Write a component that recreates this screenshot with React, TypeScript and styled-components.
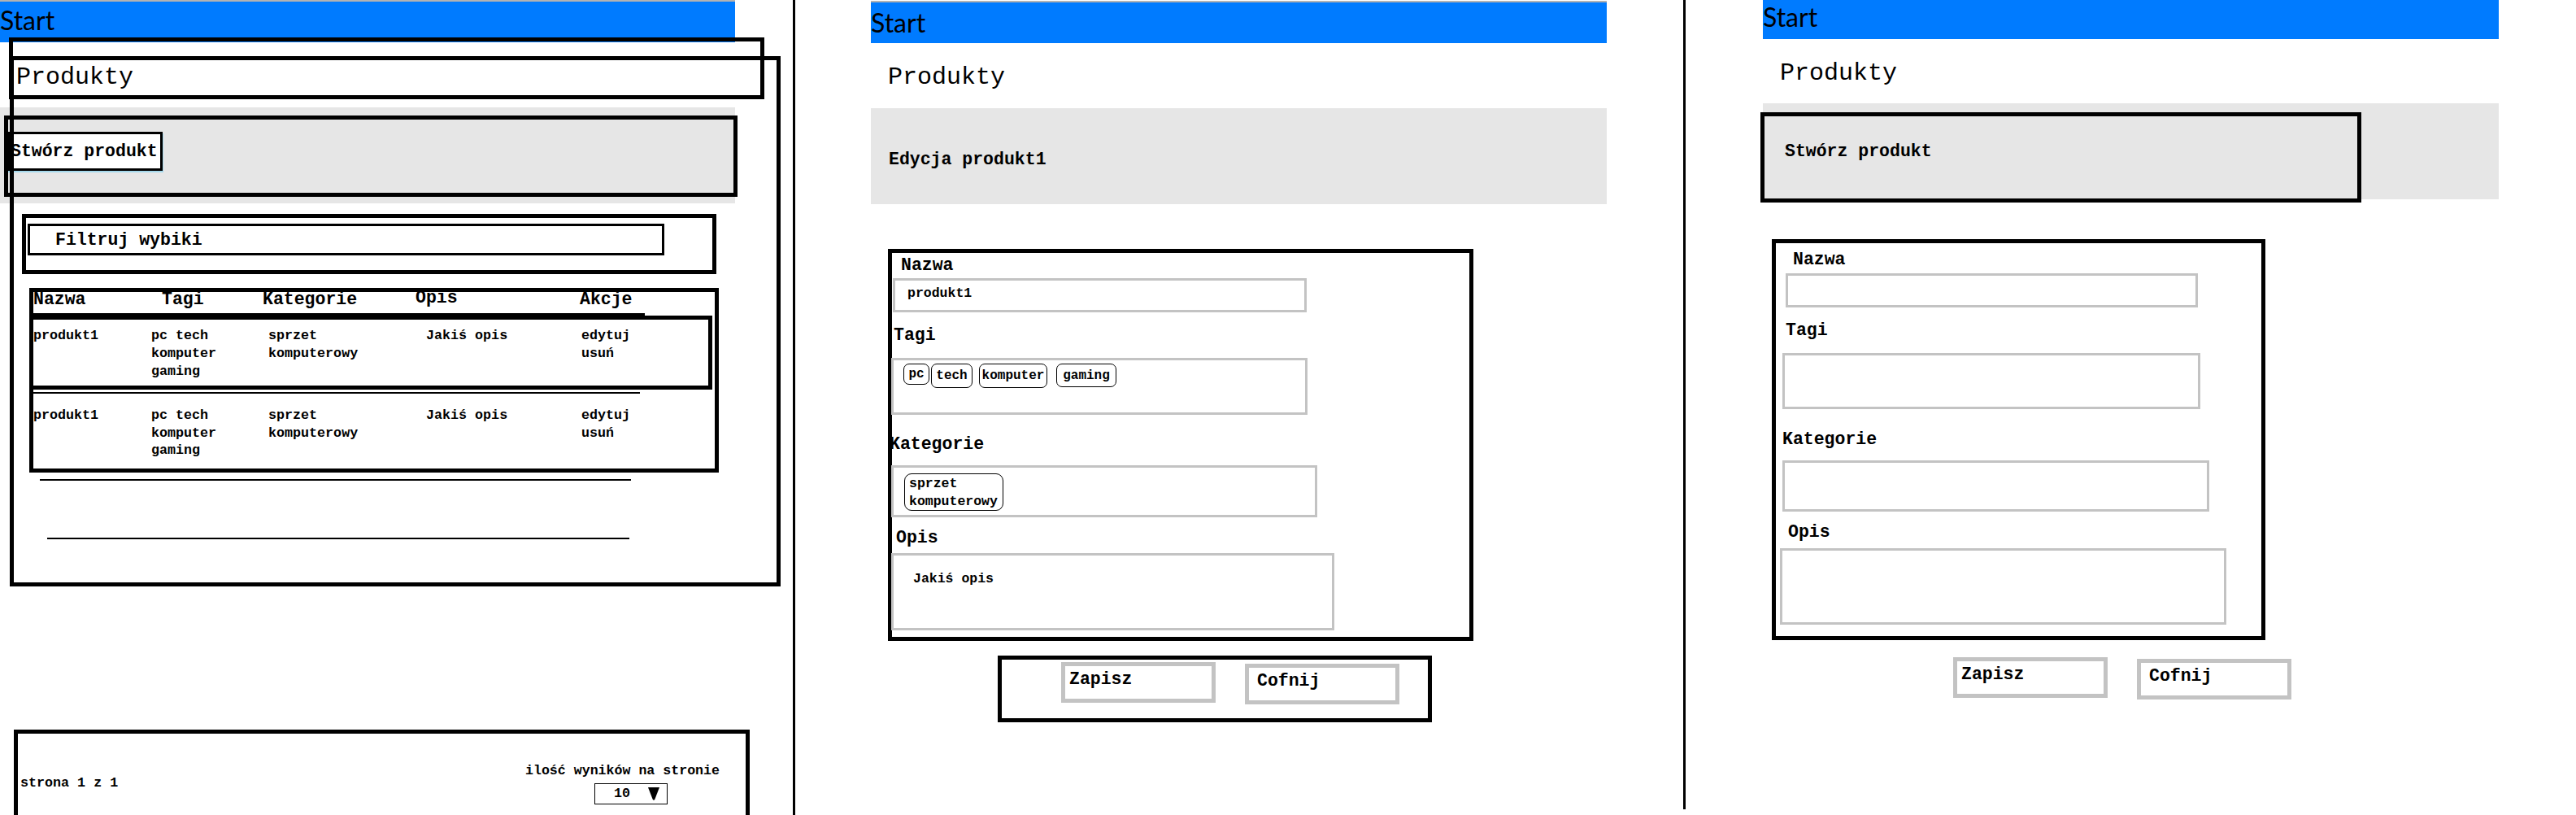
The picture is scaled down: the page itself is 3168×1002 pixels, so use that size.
import React from 'react';
import styled, { createGlobalStyle } from 'styled-components';

const MONO = `"Liberation Mono", "DejaVu Sans Mono", monospace`;

const Global = createGlobalStyle`
  html, body { margin: 0; padding: 0; background: #fff; }
  body { font-family: ${MONO}; color: #000; }
  *, *::before, *::after { box-sizing: border-box; }
`;

const Page = styled.div`
  display: flex;
  width: 3168px;
  height: 1002px;
  overflow: hidden;
  background: #fff;
`;

const Column = styled.section<{ $w: number; $pl: number }>`
  position: relative;
  flex: none;
  width: ${(p) => p.$w}px;
  height: 100%;
  padding-left: ${(p) => p.$pl}px;
  display: flex;
  flex-direction: column;
  align-items: flex-start;
`;

const Divider = styled.div<{ $h: number }>`
  flex: none;
  width: 3px;
  height: ${(p) => p.$h}px;
  background: #000;
`;

const TopBar = styled.header<{ $w: number; $mt: number; $grey: boolean; $h: number; $lh: number }>`
  flex: none;
  width: ${(p) => p.$w}px;
  margin-top: ${(p) => p.$mt}px;
  height: ${(p) => p.$h + (p.$grey ? 2 : 0)}px;
  border-top: ${(p) => (p.$grey ? '2px solid #b2b2b2' : 'none')};
  background: #007bff;
  font-family: Lato, "Open Sans", sans-serif;
  font-size: 32px;
  line-height: ${(p) => p.$lh}px;
  color: #000;
`;

const Title = styled.h1<{ $mt: number; $ml: number }>`
  margin: ${(p) => p.$mt}px 0 0 ${(p) => p.$ml}px;
  font: 400 30px/36px ${MONO};
  color: #000;
`;

const Band = styled.div<{ $mt: number; $ml?: number; $w: number }>`
  flex: none;
  width: ${(p) => p.$w}px;
  height: 118px;
  margin-top: ${(p) => p.$mt}px;
  margin-left: ${(p) => p.$ml ?? 0}px;
  background: #e6e6e6;
  display: flex;
  flex-direction: column;
  align-items: flex-start;
`;

const BandText = styled.div<{ $pt: number; $pl: number }>`
  padding: ${(p) => p.$pt}px 0 0 ${(p) => p.$pl}px;
  font: 700 21.5px/24px ${MONO};
  white-space: nowrap;
`;

const ActionBox = styled.div<{ $mt: number; $ml: number; $w: number; $h: number; $pt?: number; $pl?: number }>`
  flex: none;
  margin: ${(p) => p.$mt}px 0 0 ${(p) => p.$ml}px;
  width: ${(p) => p.$w}px;
  height: ${(p) => p.$h}px;
  border: 5px solid #000;
  padding: ${(p) => p.$pt ?? 0}px 0 0 ${(p) => p.$pl ?? 0}px;
  display: flex;
  flex-direction: column;
  align-items: flex-start;
  font: 700 21.5px/24px ${MONO};
  white-space: nowrap;
`;

const CreateButton = styled.button`
  flex: none;
  margin: 15px 0 0 -1px;
  width: 191px;
  height: 48px;
  border: 3px solid #000;
  background: #fff;
  box-shadow: 1px 2px 0 #a6d9ec;
  padding: 0 0 0 1px;
  display: flex;
  align-items: center;
  font: 700 21.5px/24px ${MONO};
  color: #000;
  white-space: nowrap;
  overflow: visible;
`;

const Annotation = styled.div`
  position: absolute;
  top: 46px;
  left: 11px;
  width: 929px;
  height: 76px;
  border: 5px solid #000;
  pointer-events: none;
`;

const Frame = styled.div`
  position: relative;
  flex: none;
  margin: 17px 0 0 12px;
  width: 948px;
  height: 652px;
  padding: 5px;
  display: flex;
  flex-direction: column;
  align-items: flex-start;

  &::after {
    content: '';
    position: absolute;
    inset: 0;
    border: 5px solid #000;
    pointer-events: none;
  }
`;

const FilterBox = styled.div`
  flex: none;
  margin: 13px 0 0 10px;
  width: 854px;
  height: 74px;
  border: 5px solid #000;
`;

const FilterInput = styled.div`
  margin: 7px 0 0 2px;
  width: 783px;
  height: 39px;
  border: 3px solid #000;
  padding-left: 31px;
  display: flex;
  align-items: center;
  font: 700 21.5px/24px ${MONO};
`;

const TableBox = styled.div`
  flex: none;
  margin: 17px 0 0 19px;
  width: 848px;
  height: 227px;
  border: 5px solid #000;
  display: flex;
  flex-direction: column;
  align-items: flex-start;
`;

const HeadRow = styled.div`
  display: grid;
  grid-template-columns: 158px 124px 188px 202px auto;
  margin-top: -3px;
  width: 100%;
  font: 700 21.5px/24px ${MONO};
`;

const HeadCell = styled.div<{ $lift?: number }>`
  margin-top: ${(p) => -(p.$lift ?? 0)}px;
  white-space: nowrap;
`;

const HeadRule = styled.div`
  flex: none;
  margin: 5px 0 0 -5px;
  width: 757px;
  height: 4px;
  background: #000;
`;

const Row = styled.div<{ $boxed: boolean; $mt: number }>`
  flex: none;
  display: grid;
  grid-template-columns: 145px 144px 194px 191px auto;
  margin: ${(p) => p.$mt}px 0 0 ${(p) => (p.$boxed ? -5 : 0)}px;
  width: ${(p) => (p.$boxed ? 840 : 800)}px;
  height: ${(p) => (p.$boxed ? 91 : 66)}px;
  border: ${(p) => (p.$boxed ? '5px solid #000' : 'none')};
  padding-top: ${(p) => (p.$boxed ? 9.4 : 0)}px;
  font: 700 16.7px/21.7px ${MONO};
`;

const Cell = styled.div`
  white-space: pre-line;
`;

const ThinRule = styled.div<{ $mt: number; $ml: number; $w: number }>`
  flex: none;
  margin: ${(p) => p.$mt}px 0 0 ${(p) => p.$ml}px;
  width: ${(p) => p.$w}px;
  height: 1.5px;
  background: #000;
`;

const Pager = styled.footer`
  flex: none;
  margin: 176px 0 0 17px;
  width: 905px;
  height: 140px;
  border: 5px solid #000;
  padding: 0 32px 0 3px;
  display: flex;
  justify-content: space-between;
  align-items: flex-start;
`;

const PagerText = styled.div`
  margin-top: 50.5px;
  font: 700 16.7px/20px ${MONO};
  white-space: nowrap;
`;

const PagerRight = styled.div`
  margin-top: 35.5px;
  display: flex;
  flex-direction: column;
  align-items: flex-start;
  font: 700 16.6px/20px ${MONO};
  white-space: nowrap;
`;

const PerPageSelect = styled.div`
  margin: 5.5px 0 0 85px;
  width: 90px;
  height: 26px;
  border: 1.5px solid #000;
  padding-left: 23px;
  display: flex;
  align-items: center;
  gap: 22px;
  font: 700 16.7px/20px ${MONO};
`;

const FormBox = styled.form<{ $mt: number; $ml: number; $w: number; $h: number }>`
  flex: none;
  margin: ${(p) => p.$mt}px 0 0 ${(p) => p.$ml}px;
  width: ${(p) => p.$w}px;
  height: ${(p) => p.$h}px;
  border: 5px solid #000;
  display: flex;
  flex-direction: column;
  align-items: flex-start;
`;

const FieldLabel = styled.label<{ $mt: number; $ml: number }>`
  display: block;
  margin: ${(p) => p.$mt}px 0 0 ${(p) => p.$ml}px;
  font: 700 21.5px/24px ${MONO};
  white-space: nowrap;
`;

const FieldBox = styled.div<{ $mt: number; $ml: number; $w: number; $h: number }>`
  flex: none;
  margin: ${(p) => p.$mt}px 0 0 ${(p) => p.$ml}px;
  width: ${(p) => p.$w}px;
  height: ${(p) => p.$h}px;
  border: 3px solid #c3c3c3;
  background: #fff;
  display: flex;
  align-items: flex-start;
`;

const FieldValue = styled.div<{ $pt: number; $pl: number }>`
  padding: ${(p) => p.$pt}px 0 0 ${(p) => p.$pl}px;
  font: 700 16.5px/20px ${MONO};
  white-space: nowrap;
`;

const ChipList = styled.div`
  display: flex;
  align-items: flex-start;
  padding: 4px 0 0 12px;
`;

const Chip = styled.span<{ $w: number; $ml: number; $h: number }>`
  flex: none;
  margin-left: ${(p) => p.$ml}px;
  width: ${(p) => p.$w}px;
  height: ${(p) => p.$h}px;
  border: 1px solid #000;
  border-radius: 7px;
  display: flex;
  align-items: center;
  justify-content: center;
  font: 700 16px/20px ${MONO};
  white-space: nowrap;
`;

const CategoryChip = styled.span`
  margin: 7px 0 0 13px;
  width: 122px;
  height: 46px;
  border: 1px solid #000;
  border-radius: 9px;
  padding: 1px 0 0 5px;
  font: 700 16.5px/21.5px ${MONO};
  white-space: pre-line;
`;

const ButtonGroup = styled.div<{ $boxed: boolean; $mt: number; $ml: number }>`
  flex: none;
  margin: ${(p) => p.$mt}px 0 0 ${(p) => p.$ml}px;
  width: ${(p) => (p.$boxed ? '534px' : 'auto')};
  height: ${(p) => (p.$boxed ? '82px' : 'auto')};
  border: ${(p) => (p.$boxed ? '5px solid #000' : 'none')};
  display: flex;
  align-items: flex-start;
`;

const FormButton = styled.button<{ $mt: number; $ml: number; $pl: number }>`
  flex: none;
  margin: ${(p) => p.$mt}px 0 0 ${(p) => p.$ml}px;
  width: 190px;
  height: 50px;
  border: 5px solid #c3c3c3;
  background: #fff;
  padding: 3.5px 0 0 ${(p) => p.$pl}px;
  display: flex;
  align-items: flex-start;
  font: 700 21.5px/24px ${MONO};
  color: #000;
`;

type Field = {
  label: string;
  lmt: number;
  lml: number;
  bmt: number;
  bml: number;
  w: number;
  h: number;
  content?: 'name' | 'tags' | 'category' | 'desc';
};

const editFields: Field[] = [
  { label: 'Nazwa', lmt: 2.5, lml: 11, bmt: 4.5, bml: 1, w: 509, h: 42, content: 'name' },
  { label: 'Tagi', lmt: 15.5, lml: 2, bmt: 16.5, bml: -1, w: 512, h: 70, content: 'tags' },
  { label: 'Kategorie', lmt: 23.5, lml: -3, bmt: 14.5, bml: -1, w: 524, h: 64, content: 'category' },
  { label: 'Opis', lmt: 12.5, lml: 5, bmt: 7.5, bml: -1, w: 545, h: 95, content: 'desc' },
];

const createFields: Field[] = [
  { label: 'Nazwa', lmt: 7.5, lml: 21, bmt: 5.5, bml: 12, w: 507, h: 42 },
  { label: 'Tagi', lmt: 15.5, lml: 12, bmt: 16.5, bml: 8, w: 514, h: 69 },
  { label: 'Kategorie', lmt: 24.5, lml: 8, bmt: 14.5, bml: 8, w: 525, h: 63 },
  { label: 'Opis', lmt: 12.5, lml: 15, bmt: 8.5, bml: 5, w: 549, h: 94 },
];

const tags = [
  { t: 'pc', w: 32, ml: 0, h: 26 },
  { t: 'tech', w: 51, ml: 2, h: 30 },
  { t: 'komputer', w: 84, ml: 8, h: 30 },
  { t: 'gaming', w: 74, ml: 11, h: 29 },
];

const products = [
  { name: 'produkt1', tags: 'pc tech\nkomputer\ngaming', cat: 'sprzet\nkomputerowy', desc: 'Jakiś opis', act: 'edytuj\nusuń' },
  { name: 'produkt1', tags: 'pc tech\nkomputer\ngaming', cat: 'sprzet\nkomputerowy', desc: 'Jakiś opis', act: 'edytuj\nusuń' },
];

function FieldContent({ kind }: { kind?: Field['content'] }) {
  if (kind === 'name') return <FieldValue $pt={6} $pl={15}>produkt1</FieldValue>;
  if (kind === 'tags')
    return (
      <ChipList>
        {tags.map((c) => (
          <Chip key={c.t} $w={c.w} $ml={c.ml} $h={c.h}>
            {c.t}
          </Chip>
        ))}
      </ChipList>
    );
  if (kind === 'category') return <CategoryChip>{'sprzet\nkomputerowy'}</CategoryChip>;
  if (kind === 'desc') return <FieldValue $pt={19} $pl={24}>Jakiś opis</FieldValue>;
  return null;
}

function ProductForm({ fields, mt, ml, w, h }: { fields: Field[]; mt: number; ml: number; w: number; h: number }) {
  return (
    <FormBox $mt={mt} $ml={ml} $w={w} $h={h} onSubmit={(e) => e.preventDefault()}>
      {fields.map((f) => (
        <React.Fragment key={f.label}>
          <FieldLabel $mt={f.lmt} $ml={f.lml}>{f.label}</FieldLabel>
          <FieldBox $mt={f.bmt} $ml={f.bml} $w={f.w} $h={f.h}>
            <FieldContent kind={f.content} />
          </FieldBox>
        </React.Fragment>
      ))}
    </FormBox>
  );
}

function Triangle() {
  return (
    <svg width="14" height="16" viewBox="0 0 14 16">
      <path d="M0 0 H14 L8.2 15 Q7 16.4 5.8 15 Z" fill="#000" />
    </svg>
  );
}

export default function App() {
  return (
    <>
      <Global />
      <Page>
        {/* Lista produktów */}
        <Column $w={975} $pl={0}>
          <TopBar $w={904} $mt={0} $grey $h={50} $lh={46}>Start</TopBar>
          <Frame>
            <Title $mt={3} $ml={3}>Produkty</Title>
            <Band $mt={19} $ml={-17} $w={904}>
              <ActionBox $mt={10} $ml={5} $w={902} $h={100}>
                <CreateButton type="button">Stwórz produkt</CreateButton>
              </ActionBox>
            </Band>
            <FilterBox>
              <FilterInput>Filtruj wybiki</FilterInput>
            </FilterBox>
            <TableBox>
              <HeadRow>
                <HeadCell>Nazwa</HeadCell>
                <HeadCell>Tagi</HeadCell>
                <HeadCell>Kategorie</HeadCell>
                <HeadCell $lift={2}>Opis</HeadCell>
                <HeadCell>Akcje</HeadCell>
              </HeadRow>
              <HeadRule />
              {products.map((p, i) => (
                <React.Fragment key={i}>
                  {i > 0 && <ThinRule $mt={3} $ml={-5} $w={751} />}
                  <Row $boxed={i === 0} $mt={i === 0 ? -1 : 16.4}>
                    <Cell>{p.name}</Cell>
                    <Cell>{p.tags}</Cell>
                    <Cell>{p.cat}</Cell>
                    <Cell>{p.desc}</Cell>
                    <Cell>{p.act}</Cell>
                  </Row>
                </React.Fragment>
              ))}
            </TableBox>
            <ThinRule $mt={8} $ml={32} $w={727} />
            <ThinRule $mt={70.5} $ml={41} $w={716} />
          </Frame>
          <Pager>
            <PagerText>strona 1 z 1</PagerText>
            <PagerRight>
              <span>ilość wyników na stronie</span>
              <PerPageSelect>
                <span>10</span>
                <Triangle />
              </PerPageSelect>
            </PagerRight>
          </Pager>
          <Annotation />
        </Column>
        <Divider $h={1002} />

        {/* Edycja produktu */}
        <Column $w={1092} $pl={93}>
          <TopBar $w={905} $mt={1} $grey $h={50} $lh={49}>Start</TopBar>
          <Title $mt={24} $ml={21}>Produkty</Title>
          <Band $mt={20} $w={905}>
            <BandText $pt={50.5} $pl={22}>Edycja produkt1</BandText>
          </Band>
          <ProductForm fields={editFields} mt={55} ml={21} w={720} h={482} />
          <ButtonGroup $boxed $mt={18} $ml={156}>
            <FormButton type="button" $mt={3} $ml={73} $pl={5}>Zapisz</FormButton>
            <FormButton type="button" $mt={5} $ml={36} $pl={10}>Cofnij</FormButton>
          </ButtonGroup>
        </Column>
        <Divider $h={995} />

        {/* Tworzenie produktu */}
        <Column $w={1095} $pl={95}>
          <TopBar $w={905} $mt={0} $grey={false} $h={48} $lh={41}>Start</TopBar>
          <Title $mt={24} $ml={21}>Produkty</Title>
          <Band $mt={19} $w={905}>
            <ActionBox $mt={11} $ml={-3} $w={739} $h={111} $pt={30.5} $pl={25}>
              Stwórz produkt
            </ActionBox>
          </Band>
          <ProductForm fields={createFields} mt={49} ml={11} w={607} h={493} />
          <ButtonGroup $boxed={false} $mt={21} $ml={234}>
            <FormButton type="button" $mt={0} $ml={0} $pl={5}>Zapisz</FormButton>
            <FormButton type="button" $mt={2} $ml={36} $pl={10}>Cofnij</FormButton>
          </ButtonGroup>
        </Column>
      </Page>
    </>
  );
}
